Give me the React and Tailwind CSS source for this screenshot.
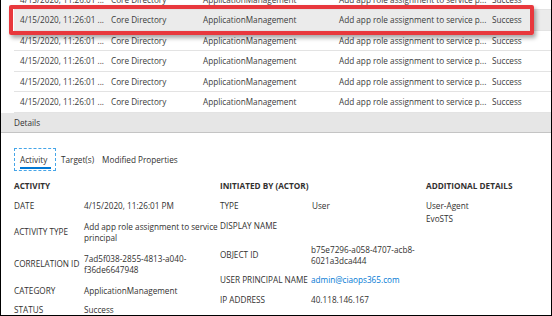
import React from "react";

const rows = [0, 1, 2, 3, 4, 5];

function TableRow({ active }) {
  return (
    <div className={`flex h-[20.5px] shrink-0 items-center border-b border-[#e3e3e3] text-[#3b3b3b] ${active ? "bg-[#ebebeb]" : ""}`}>
      <div className="w-[97px] pl-[6px] whitespace-nowrap">4/15/2020, 11:26:01 ...</div>
      <div className="w-[92px] whitespace-nowrap">Core Directory</div>
      <div className="w-[136px] whitespace-nowrap">ApplicationManagement</div>
      <div className="w-[153px] whitespace-nowrap">Add app role assignment to service p...</div>
      <div className="whitespace-nowrap">Success</div>
    </div>
  );
}

function Field({ label, labelW, children, className = "" }) {
  return (
    <div className={`flex items-center ${className}`}>
      <div className={`${labelW} shrink-0 whitespace-nowrap`}>{label}</div>
      <div>{children}</div>
    </div>
  );
}

export default function App() {
  return (
    <div className="relative h-[316px] w-[552px] overflow-hidden border-x border-b border-black bg-white font-['Open_Sans',sans-serif] text-[8.2px] leading-[11px] text-[#323130]">
      {/* audit log rows */}
      <div className="relative -mt-[10.5px] flex flex-col pl-[13px]">
        {rows.map((r) => (
          <TableRow key={r} active={r === 1} />
        ))}
        <div className="absolute left-[8px] top-[15.5px] h-[30px] w-[525px] rounded-[2px] border-[4px] border-[#e8383d] shadow-[2px_3px_4px_rgba(0,0,0,0.35)]" />
      </div>

      {/* details bar */}
      <div className="flex h-[20px] items-center border-b border-[#c4c4c4] bg-[#e6e6e6] pl-[13px] text-[#333]">Details</div>

      <div className="pl-[13px]">
        {/* tabs */}
        <div className="mt-[15.5px] flex items-center">
          <div className="flex h-[23px] w-[42px] flex-col items-start border border-dashed border-[#45a5e8] pl-[5px] pt-[5px]">
            <span>Activity</span>
            <span className="mt-[2px] h-[2px] w-[31px] bg-[#0078d4]" />
          </div>
          <span className="ml-[5px]">Target(s)</span>
          <span className="ml-[8px]">Modified Properties</span>
        </div>

        {/* fields */}
        <div className="mt-[8.5px] grid grid-cols-[206px_206px_1fr]">
          <div className="flex flex-col">
            <div className="font-bold">ACTIVITY</div>
            <Field label="DATE" labelW="w-[70px]" className="mt-[9px]">
              4/15/2020, 11:26:01 PM
            </Field>
            <Field label="ACTIVITY TYPE" labelW="w-[70px]" className="mt-[10px]">
              <div className="w-[135px]">Add app role assignment to service principal</div>
            </Field>
            <Field label="CORRELATION ID" labelW="w-[70px]" className="mt-[10px]">
              <div className="w-[135px]">7ad5f038-2855-4813-a040-f36de6647948</div>
            </Field>
            <Field label="CATEGORY" labelW="w-[70px]" className="mt-[10px]">
              ApplicationManagement
            </Field>
            <Field label="STATUS" labelW="w-[70px]" className="mt-[8px]">
              Success
            </Field>
          </div>

          <div className="flex flex-col">
            <div className="font-bold">INITIATED BY (ACTOR)</div>
            <Field label="TYPE" labelW="w-[92px]" className="mt-[9px]">
              User
            </Field>
            <Field label="DISPLAY NAME" labelW="w-[92px]" className="mt-[9px]">
              {""}
            </Field>
            <Field label="OBJECT ID" labelW="w-[91px]" className="mt-[13px]">
              <div className="w-[112px]">b75e7296-a058-4707-acb8-6021a3dca444</div>
            </Field>
            <Field label="USER PRINCIPAL NAME" labelW="w-[91px]" className="mt-[8.5px]">
              <span className="text-[#0078d4]">admin@ciaops365.com</span>
            </Field>
            <Field label="IP ADDRESS" labelW="w-[91px]" className="mt-[9px]">
              40.118.146.167
            </Field>
          </div>

          <div className="flex flex-col">
            <div className="font-bold">ADDITIONAL DETAILS</div>
            <div className="mt-[9px]">User-Agent</div>
            <div className="mt-[2px]">EvoSTS</div>
          </div>
        </div>
      </div>
    </div>
  );
}
